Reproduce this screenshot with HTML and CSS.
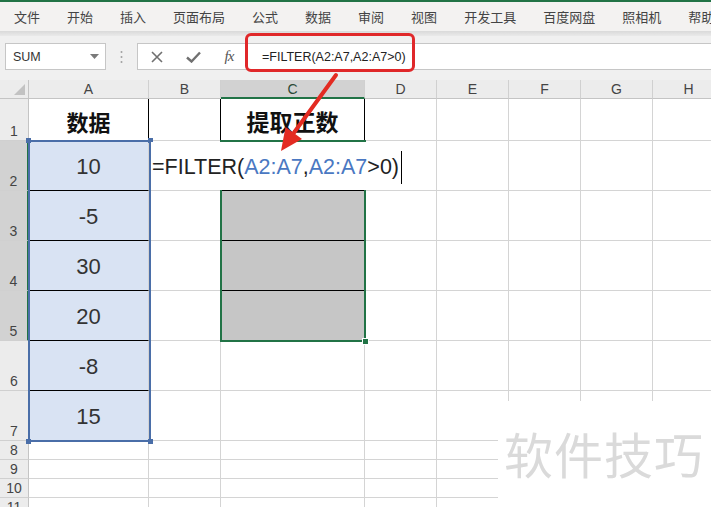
FILE: index.html
```html
<!DOCTYPE html>
<html lang="zh-CN">
<head>
<meta charset="utf-8">
<title>FILTER</title>
<link rel="stylesheet" href="styles.css">
</head>
<body>
<div class="app">
  <div class="topline"></div>
  <nav class="menu">
    <span>文件</span><span>开始</span><span>插入</span><span>页面布局</span><span>公式</span><span>数据</span><span>审阅</span><span>视图</span><span>开发工具</span><span>百度网盘</span><span>照相机</span><span>帮助</span>
  </nav>
  <div class="band"></div>
  <div class="fbar">
    <div class="namebox"><span class="nb-text">SUM</span>
      <svg class="caret" width="9" height="5" viewBox="0 0 9 5"><path d="M0 0 H9 L4.5 5 Z" fill="#7a7a7a"/></svg>
    </div>
    <div class="grip">
      <svg width="3" height="14" viewBox="0 0 3 14"><circle cx="1.5" cy="2" r="1" fill="#a0a0a0"/><circle cx="1.5" cy="7" r="1" fill="#a0a0a0"/><circle cx="1.5" cy="12" r="1" fill="#a0a0a0"/></svg>
    </div>
    <div class="formula">
      <span class="fbtn btn-x"><svg width="12" height="12" viewBox="0 0 12 12"><path d="M1 1 L11 11 M11 1 L1 11" stroke="#707070" stroke-width="1.6" fill="none"/></svg></span>
      <span class="fbtn btn-ok"><svg width="15" height="12" viewBox="0 0 15 12"><path d="M1 6.5 L5.5 10.5 L14 1.5" stroke="#707070" stroke-width="2.4" fill="none"/></svg></span>
      <span class="fbtn fx">fx</span>
      <span class="ftext">=FILTER(A2:A7,A2:A7&gt;0)</span>
    </div>
  </div>

  <div class="sheet">
    <div class="corner"></div>
    <div class="ch">A</div><div class="ch">B</div><div class="ch sel">C</div><div class="ch">D</div><div class="ch">E</div><div class="ch">F</div><div class="ch">G</div><div class="ch">H</div>

    <div class="rh">1</div>
    <div class="c title br">数据</div><div class="c br"></div><div class="c title title-c br">提取正数</div><div class="c"></div><div class="c"></div><div class="c"></div><div class="c"></div><div class="c"></div>

    <div class="rh hl">2</div>
    <div class="c num bb">10</div><div class="c"></div><div class="c bb"></div><div class="c"></div><div class="c"></div><div class="c"></div><div class="c"></div><div class="c"></div>

    <div class="rh hl">3</div>
    <div class="c num bb">-5</div><div class="c"></div><div class="c gray bb"></div><div class="c"></div><div class="c"></div><div class="c"></div><div class="c"></div><div class="c"></div>

    <div class="rh hl">4</div>
    <div class="c num bb">30</div><div class="c"></div><div class="c gray bb"></div><div class="c"></div><div class="c"></div><div class="c"></div><div class="c"></div><div class="c"></div>

    <div class="rh hl">5</div>
    <div class="c num bb">20</div><div class="c"></div><div class="c gray"></div><div class="c"></div><div class="c"></div><div class="c"></div><div class="c"></div><div class="c"></div>

    <div class="rh">6</div>
    <div class="c num bb">-8</div><div class="c"></div><div class="c"></div><div class="c"></div><div class="c"></div><div class="c"></div><div class="c"></div><div class="c"></div>

    <div class="rh">7</div>
    <div class="c num">15</div><div class="c"></div><div class="c"></div><div class="c"></div><div class="c"></div><div class="c"></div><div class="c"></div><div class="c"></div>

    <div class="rh">8</div>
    <div class="c"></div><div class="c"></div><div class="c"></div><div class="c"></div><div class="c"></div><div class="c"></div><div class="c"></div><div class="c"></div>
    <div class="rh">9</div>
    <div class="c"></div><div class="c"></div><div class="c"></div><div class="c"></div><div class="c"></div><div class="c"></div><div class="c"></div><div class="c"></div>
    <div class="rh">10</div>
    <div class="c"></div><div class="c"></div><div class="c"></div><div class="c"></div><div class="c"></div><div class="c"></div><div class="c"></div><div class="c"></div>
    <div class="rh">11</div>
    <div class="c"></div><div class="c"></div><div class="c"></div><div class="c"></div><div class="c"></div><div class="c"></div><div class="c"></div><div class="c"></div>
  </div>

  <!-- overlays -->
  <div class="sel-a">
    <span class="h h-tl"></span><span class="h h-tr"></span><span class="h h-bl"></span><span class="h h-br"></span>
  </div>
  <div class="sel-c"><span class="hg"></span></div>
  <div class="editbox"><span>=FILTER(</span><span class="ref">A2:A7</span><span>,</span><span class="ref">A2:A7</span><span>&gt;0)</span><span class="cursor"></span></div>
  <div class="redbox"></div>
  <svg class="arrow" width="711" height="507" viewBox="0 0 711 507">
    <line x1="336" y1="75" x2="293" y2="134" stroke="#e32b22" stroke-width="4" stroke-linecap="round"/>
    <polygon points="281,151 302,139 285.5,127" fill="#e32b22"/>
  </svg>
  <div class="watermark">软件技巧</div>
</div>
</body>
</html>
```

FILE: styles.css
```css
* { box-sizing: border-box; }
body { margin: 0; background: #fff; font-family: "Liberation Sans", "Noto Sans CJK SC", sans-serif; }
.app { position: relative; width: 711px; height: 507px; overflow: hidden; background: #fff; }

.topline { height: 2px; background: #217346; }
.menu {
  height: 29px; background: #f3f2f1; display: flex; align-items: center; gap: 27px;
  padding-left: 14px; padding-bottom: 1px; font-family: "Noto Sans CJK SC", sans-serif; font-size: 13px;
  color: #444; white-space: nowrap;
}
.band { height: 5px; background: linear-gradient(#d9d9d9, #eaeaea); }

.fbar { height: 44px; background: #f0f0f0; display: flex; align-items: flex-start; padding-top: 7px; }
.namebox {
  margin-left: 5px; width: 101px; height: 27px; background: #fff; border: 1px solid #c6c6c6;
  display: flex; align-items: center; padding-left: 7px; font-size: 12.5px; color: #333;
}
.nb-text { flex: 1; }
.caret { margin-right: 6px; }
.grip { width: 31px; height: 27px; display: flex; align-items: center; justify-content: center; }
.formula {
  flex: 1; height: 27px; background: #fff; border: 1px solid #c6c6c6; border-right: none;
  display: flex; align-items: center;
}
.fbtn { display: flex; align-items: center; justify-content: center; width: 36px; height: 25px; }
.btn-x { width: 37px; }
.fx { font-family: "Liberation Serif", serif; font-style: italic; font-size: 15px; color: #555; letter-spacing: -1px; }
.ftext { padding-left: 15px; font-size: 12.5px; color: #222; white-space: nowrap; }

.sheet {
  display: grid;
  grid-template-columns: 29px 120px 72px 144px repeat(5, 72px);
  grid-template-rows: 19px 42px repeat(6, 50px) repeat(4, 19px);
}
.corner { background: #ececec; border-right: 1px solid #c4c4c4; border-bottom: 1px solid #c4c4c4; position: relative; }
.corner::after {
  content: ""; position: absolute; right: 3px; bottom: 3px; width: 0; height: 0;
  border-left: 11px solid transparent; border-bottom: 11px solid #c2c2c2;
}
.ch {
  background: #ececec; border-right: 1px solid #d0d0d0; border-bottom: 1px solid #c4c4c4;
  font-size: 14px; color: #444; display: flex; justify-content: center; align-items: flex-end;
  line-height: 16px; padding-bottom: 1px;
}
.ch.sel { background: #d2d2d2; border-bottom: 2px solid #217346; color: #2b4a38; padding-bottom: 0; }
.rh {
  background: #ececec; border-right: 1px solid #c4c4c4; border-bottom: 1px solid #d0d0d0;
  font-size: 14px; color: #444; display: flex; justify-content: center; align-items: flex-end;
  line-height: 16px; padding-bottom: 1px;
}
.rh.hl { background: #d2d2d2; border-right: 2px solid #217346; }

.c { border-right: 1px solid #d4d4d4; border-bottom: 1px solid #d4d4d4; }
.bb { border-bottom-color: #000; }
.br { border-right-color: #000; }
.title {
  font-family: "Noto Sans CJK SC", sans-serif; font-weight: 700; font-size: 22px; color: #111;
  display: flex; align-items: center; justify-content: center; padding-top: 2px;
}
.title-c { font-size: 23px; }
.num {
  background: #d9e3f3; display: flex; align-items: center; justify-content: center;
  font-size: 22px; color: #333; padding-top: 3px;
}
.gray { background: #c6c6c6; }

/* overlays */
.sel-a { position: absolute; left: 28px; top: 140px; width: 123px; height: 302px; border: 2px solid #4a6ea8; }
.h { position: absolute; width: 5px; height: 5px; background: #4a6ea8; }
.h-tl { left: -4px; top: -4px; }
.h-tr { right: -4px; top: -4px; }
.h-bl { left: -4px; bottom: -4px; }
.h-br { right: -4px; bottom: -4px; }
.sel-c { position: absolute; left: 220px; top: 140px; width: 146px; height: 202px; border: 2px solid #217346; }
.hg { position: absolute; right: -5px; bottom: -5px; width: 7px; height: 7px; background: #217346; border: 1px solid #fff; }
.editbox {
  position: absolute; left: 151px; top: 142px; width: 256px; height: 48px; background: #fff;
  display: flex; align-items: center; padding-left: 1px; padding-top: 3px; font-size: 21.5px; color: #222; white-space: nowrap;
}
.ref { color: #4a78c2; }
.cursor { display: inline-block; width: 1px; height: 33px; background: #000; margin-left: 2px; }
.redbox { position: absolute; left: 245px; top: 33px; width: 170px; height: 39px; border: 3px solid #e0282a; border-radius: 6px; }
.arrow { position: absolute; left: 0; top: 0; pointer-events: none; }
.watermark {
  position: absolute; left: 498px; top: 401px; width: 213px; height: 106px; background: #fff;
  padding: 24px 0 0 6px; font-family: "Noto Sans CJK SC", sans-serif; font-size: 49px;
  line-height: 56px; color: #dadada; letter-spacing: 1px; white-space: nowrap;
}
```
